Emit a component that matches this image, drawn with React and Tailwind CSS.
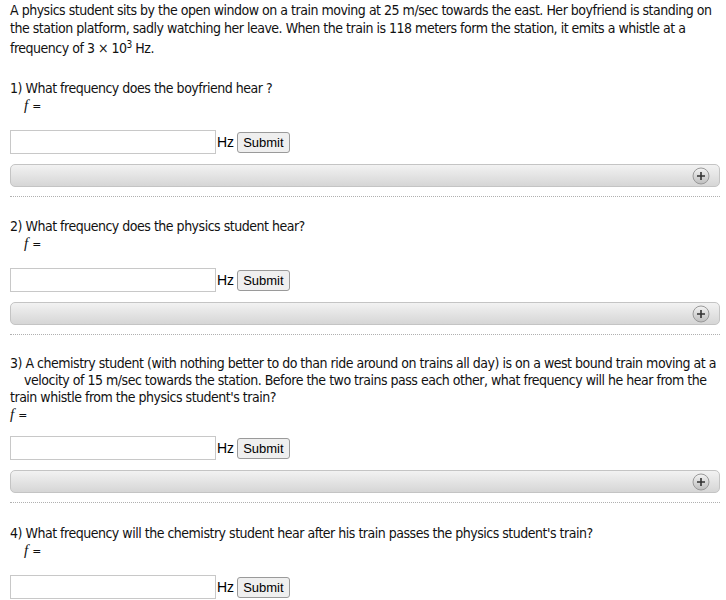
import React from "react";

function PlusIcon() {
  return (
    <svg width="18" height="18" viewBox="0 0 18 18">
      <defs>
        <linearGradient id="pg" x1="0" y1="0" x2="0" y2="1">
          <stop offset="0" stopColor="#f4f4f4" />
          <stop offset="1" stopColor="#bdbdbd" />
        </linearGradient>
      </defs>
      <circle cx="9" cy="9" r="8" fill="url(#pg)" stroke="#9a9a9a" strokeWidth="1" />
      <path d="M9 5v8M5 9h8" stroke="#333" strokeWidth="1.6" />
    </svg>
  );
}

function Answer() {
  return (
    <>
      <div className="flex items-center tracking-normal">
        <input type="text" className="w-[206px] h-[24px] border border-[#c8c8c8] bg-white" />
        <span className="ml-[1px] text-[14px] font-['Liberation_Sans',Arial,sans-serif] text-black">Hz</span>
        <button className="ml-[3px] h-[21px] px-[5px] border border-[#9a9a9a] rounded-[3px] bg-[#efefef] text-[13px] font-['Liberation_Sans',Arial,sans-serif] text-black leading-none">
          Submit
        </button>
      </div>
      <div className="mt-[10px] h-[23px] w-[710px] rounded-[5px] border border-[#c4c4c4] bg-gradient-to-b from-[#f2f2f2] to-[#d6d6d6] flex items-center justify-end pr-[9px]">
        <PlusIcon />
      </div>
      <div className="mt-[9px] w-[710px] border-t border-dotted border-[#b0b0b0]" />
    </>
  );
}

function FLine({ indent = true }) {
  return (
    <div className={`h-[16px] leading-[16px] text-[12px] tracking-normal ${indent ? "pl-[14px]" : ""}`}>
      <i className="font-['Liberation_Serif',serif] text-[15px]">f</i>
      <span className="ml-[4px]">=</span>
    </div>
  );
}

export default function App() {
  return (
    <div className="bg-white min-h-screen pl-[10px] pt-[1px] text-[#111] text-[14px] font-['DejaVu_Sans_Condensed','Liberation_Sans',sans-serif] tracking-[-0.035em]">
      <div className="leading-[18px] whitespace-nowrap">
        <div>A physics student sits by the open window on a train moving at 25 m/sec towards the east. Her boyfriend is standing on</div>
        <div>the station platform, sadly watching her leave. When the train is 118 meters form the station, it emits a whistle at a</div>
        <div className="pt-[2px]">
          frequency of 3 × 10<sup className="text-[10px]">3</sup> Hz.
        </div>
      </div>

      <div className="mt-[22px] leading-[18px]">1) What frequency does the boyfriend hear ?</div>
      <FLine />
      <div className="mt-[17px]">
        <Answer />
      </div>

      <div className="mt-[20px] leading-[18px]">2) What frequency does the physics student hear?</div>
      <FLine />
      <div className="mt-[17px]">
        <Answer />
      </div>

      <div className="mt-[20px] leading-[17px] whitespace-nowrap">
        <div>3) A chemistry student (with nothing better to do than ride around on trains all day) is on a west bound train moving at a</div>
        <div className="pl-[14px]">velocity of 15 m/sec towards the station. Before the two trains pass each other, what frequency will he hear from the</div>
        <div>train whistle from the physics student's train?</div>
      </div>
      <FLine indent={false} />
      <div className="mt-[14px]">
        <Answer />
      </div>

      <div className="mt-[21px] leading-[18px]">4) What frequency will the chemistry student hear after his train passes the physics student's train?</div>
      <FLine />
      <div className="mt-[17px]">
        <Answer />
      </div>
    </div>
  );
}
